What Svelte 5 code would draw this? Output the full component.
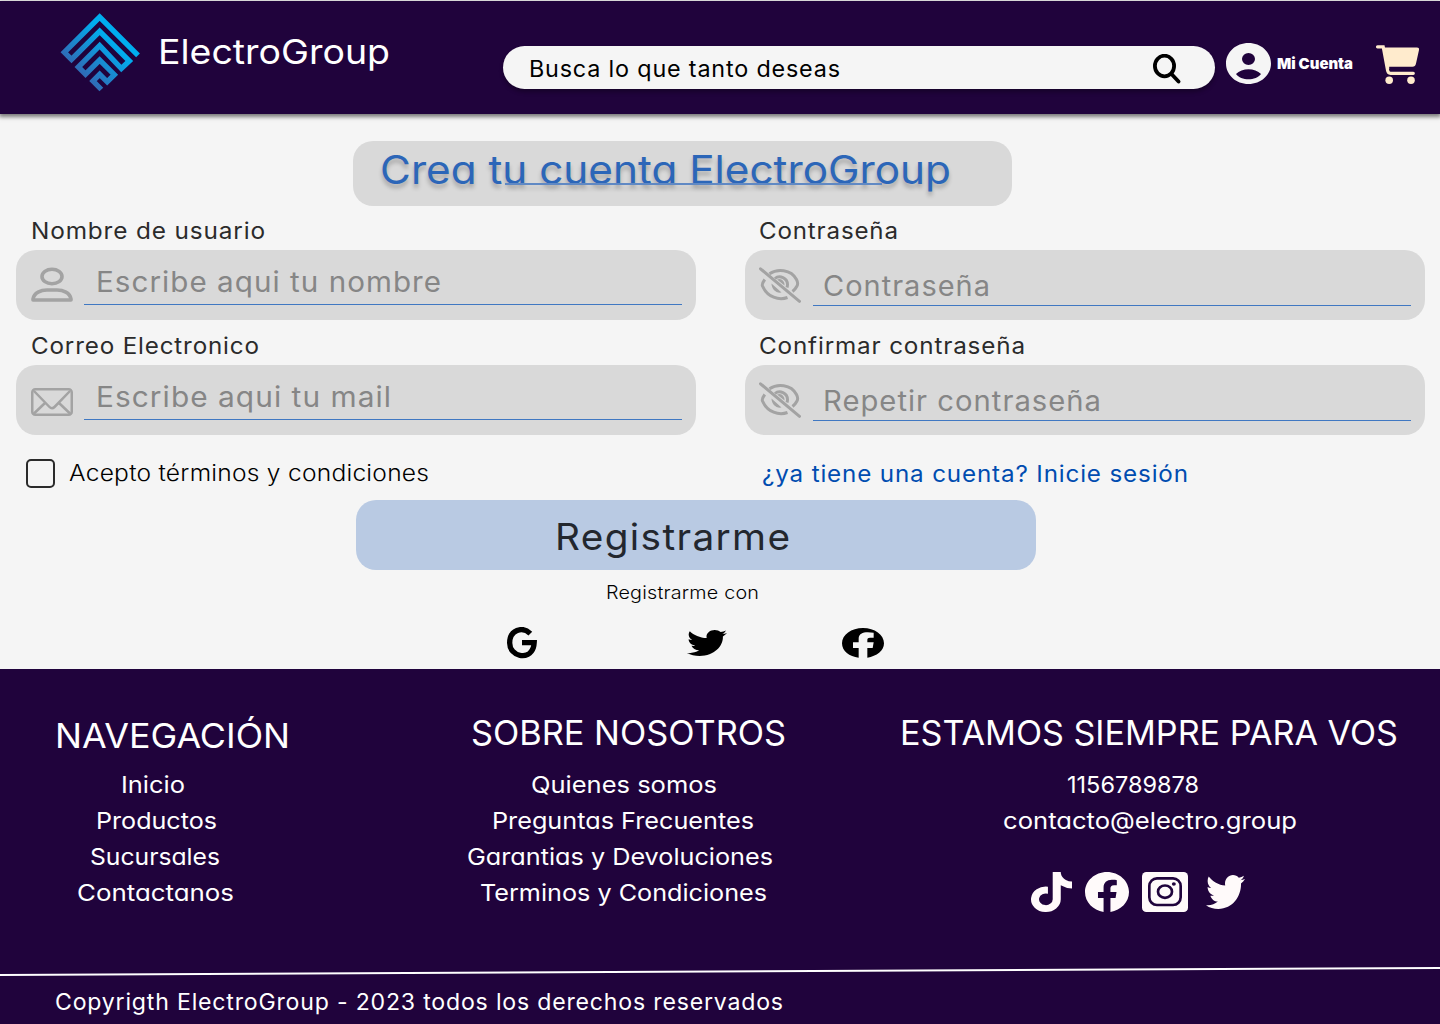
<script>
  const twitter =
    'M459.37 151.716c.325 4.548.325 9.097.325 13.645 0 138.72-105.583 298.558-298.558 298.558-59.452 0-114.68-17.219-161.137-47.106 8.447.974 16.568 1.299 25.34 1.299 49.055 0 94.213-16.568 130.274-44.832-46.132-.975-84.792-31.188-98.112-72.772 6.498.974 12.995 1.624 19.818 1.624 9.421 0 18.843-1.3 27.614-3.573-48.081-9.747-84.143-51.98-84.143-102.985v-1.299c13.969 7.797 30.214 12.67 47.431 13.319-28.264-18.843-46.781-51.005-46.781-87.391 0-19.492 5.197-37.36 14.294-52.954 51.655 63.675 129.3 105.258 216.365 109.807-1.624-7.797-2.599-15.918-2.599-24.04 0-57.828 46.782-104.934 104.934-104.934 30.213 0 57.502 12.67 76.67 33.137 23.715-4.548 46.456-13.32 66.599-25.34-7.798 24.366-24.366 44.833-46.132 57.827 21.117-2.273 41.584-8.122 60.426-16.243-14.292 20.791-32.161 39.308-52.628 54.253z';

  const fields = [
    { label: 'Nombre de usuario', labelWidth: 236, hint: 'Escribe aqui tu nombre', hintWidth: 347, icon: 'user' },
    { label: 'Contraseña', labelWidth: 141, hint: 'Contraseña', hintWidth: 169, icon: 'eye' },
    { label: 'Correo Electronico', labelWidth: 230, hint: 'Escribe aqui tu mail', hintWidth: 297, icon: 'mail' },
    { label: 'Confirmar contraseña', labelWidth: 268, hint: 'Repetir contraseña', hintWidth: 280, icon: 'eye' },
  ];

  const columns = [
    {
      name: 'nav', title: 'NAVEGACIÓN', width: 237,
      items: [
        { text: 'Inicio', width: 66, indent: 66 },
        { text: 'Productos', width: 123, indent: 41 },
        { text: 'Sucursales', width: 132, indent: 35 },
        { text: 'Contactanos', width: 159, indent: 22 },
      ],
    },
    {
      name: 'about', title: 'SOBRE NOSOTROS', width: 317,
      items: [
        { text: 'Quienes somos', width: 188, indent: 60 },
        { text: 'Preguntas Frecuentes', width: 264, indent: 21 },
        { text: 'Garantias y Devoluciones', width: 308, indent: -4 },
        { text: 'Terminos y Condiciones', width: 289, indent: 9 },
      ],
    },
    {
      name: 'contact', title: 'ESTAMOS SIEMPRE PARA VOS', width: 500,
      items: [
        { text: '1156789878', width: 134, indent: 167 },
        { text: 'contacto@electro.group', width: 296, indent: 103 },
      ],
    },
  ];

  // Extends a one-line text so that it fills the given width less a 1px inset
  // on each side, trailing tracking excluded.
  function fit(node, width) {
    const tracking = parseFloat(getComputedStyle(node).letterSpacing) || 0;
    const natural = node.getBoundingClientRect().width - tracking;
    node.style.transform = `translateX(1px) scaleX(${((width - 2) / natural).toFixed(4)})`;
  }
</script>

<div class="page">
  <header>
    <svg class="logo" viewBox="60 36 240 242">
      <defs>
        <linearGradient id="brand" gradientUnits="userSpaceOnUse" x1="110" y1="230" x2="215" y2="120">
          <stop offset="0" stop-color="#3563ae" />
          <stop offset="1" stop-color="#00aeef" />
        </linearGradient>
      </defs>
      <path
        d="M294 165.500L179 50.500L73 156.500L94.500 178L179 93.500L268 182.500L244 205L179 136.500L115 200.500L136.500 222L179 179.500L223 223.500L201.500 245L179 222.500L159 242.500L184 268"
        fill="none" stroke="url(#brand)" stroke-width="16" />
    </svg>
    <div class="brand geo"><span use:fit={234}>ElectroGroup</span></div>
    <div class="search">
      <span class="work" use:fit={313}>Busca lo que tanto deseas</span>
      <svg class="lens" viewBox="0 0 28 30">
        <ellipse cx="11.500" cy="12" rx="9.600" ry="10.300" />
        <path d="M18.500 20L25.500 27.500" />
      </svg>
    </div>
    <svg class="avatar" viewBox="0 0 45 41">
      <path fill-rule="evenodd" d="M22.500 0C35 0 45 9 45 20.500S35 41 22.500 41S0 32 0 20.500S10 0 22.500 0zM22.500 10a6.500 6 0 1 0 0 12a6.500 6 0 1 0 0-12zM10 31C15 38 30 38 35 31C29 24.500 16 24.500 10 31z" />
    </svg>
    <div class="account"><strong use:fit={78}>Mi Cuenta</strong></div>
    <svg class="cart" viewBox="0 0 43 39">
      <path d="M1.500 1.800H7.200L11.500 25Q12 28.300 14.500 28.300H37.300" />
      <path class="fill" d="M8.500 2.600H41Q43.300 2.600 43 5L40 18.500Q39.300 21.800 36.500 21.800H13.200V24H11z" />
      <ellipse class="fill" cx="13.200" cy="35.300" rx="3.800" ry="3.700" />
      <ellipse class="fill" cx="35" cy="35.300" rx="3.800" ry="3.700" />
    </svg>
  </header>

  <main>
    <h1 class="geo"><span use:fit={573}>Crea tu cuenta ElectroGroup</span><i class="rule"></i></h1>

    <div class="fields">
      {#each fields as f}
        <div class="field">
          <div class="label"><span class="work" use:fit={f.labelWidth}>{f.label}</span></div>
          <div class="box {f.icon}">
            {#if f.icon === 'user'}
              <svg class="icon" viewBox="0 0 42 36">
                <ellipse cx="21" cy="9.500" rx="10" ry="7.300" />
                <path d="M2 33V32C3 25.500 10 23 16 23H26C32 23 39 25.500 40 32V33z" stroke-linejoin="round" />
              </svg>
            {:else if f.icon === 'mail'}
              <svg class="icon" viewBox="0 0 42 28">
                <rect x="1.250" y="1.250" width="39.500" height="25.500" rx="3" />
                <path d="M3 3L18.500 19Q21 21.500 23.500 19L39 3M3 25.500L14.500 14.500M39 25.500L27.500 14.500" />
              </svg>
            {:else}
              <svg class="icon" viewBox="0 0 42 36">
                <path d="M10.500 6.800C18 1.500 32 2 37.500 12.500Q39.500 16.500 38 19Q36.500 22 33.500 24.500M5.800 12.500Q2.500 17 3.500 19C8.500 30.500 20 33.500 28.500 30.500" />
                <path d="M16 11.500C20.500 7.500 28.500 11 28.500 17.500Q28.500 19 28 20.500" />
                <path class="pupil" d="M18 12.500C22 10.500 26 14 25.500 18.500zM12.500 16.500L22.500 25.500C17 26.500 12.500 22 12.500 16.500z" />
                <path d="M1.500 1.800L40.500 34.300" stroke-linecap="round" />
              </svg>
            {/if}
            <div class="line"><span class="work" use:fit={f.hintWidth}>{f.hint}</span></div>
          </div>
        </div>
      {/each}
    </div>

    <div class="options">
      <i class="check"></i>
      <div class="terms"><span class="work light" use:fit={362}>Acepto términos y condiciones</span></div>
      <a class="login work" href="#login" use:fit={428}>¿ya tiene una cuenta? Inicie sesión</a>
    </div>

    <div class="submit"><span class="work" use:fit={237}>Registrarme</span></div>
    <div class="with"><span class="work light" use:fit={155}>Registrarme con</span></div>

    <div class="providers">
      <svg class="google" viewBox="0 0 90 96">
        <path d="M70 20C46-4 8 10 8 48C8 89 66 101 79 62Q81 56 81.500 47H45" />
      </svg>
      <svg class="bird" viewBox="0 48 512 416" preserveAspectRatio="none"><path d={twitter} /></svg>
      <svg class="face" viewBox="0 0 126 90">
        <path d="M50 89C22 86 0 70 0 46C0 20 28 0 63 0S126 20 126 46C126 69 104 85 76 89V60H92L95 43H76V36Q76 29 84 29H95V14C70 10 50 13 50 32V43H33V60H50z" />
      </svg>
    </div>
  </main>

  <footer>
    <div class="columns">
      {#each columns as c}
        <section class="{c.name} geo">
          <h2><span use:fit={c.width}>{c.title}</span></h2>
          {#each c.items as item}
            <div class="item" style:margin-left="{item.indent}px"><span use:fit={item.width}>{item.text}</span></div>
          {/each}
          {#if c.name === 'contact'}
            <div class="social">
              <svg class="tiktok" viewBox="0 0 448 512" preserveAspectRatio="none">
                <path d="M448,209.910a210.060,210.060,0,0,1-122.770-39.250V349.380A162.550,162.550,0,1,1,185,188.310V278.200a74.620,74.620,0,1,0,52.230,71.180V0l88,0a121.180,121.180,0,0,0,1.860,22.170h0A122.180,122.180,0,0,0,381,102.390a121.430,121.430,0,0,0,67,20.140Z" />
              </svg>
              <svg class="fb" viewBox="8 8 496 493" preserveAspectRatio="none">
                <path d="M504 256C504 119 393 8 256 8S8 119 8 256c0 123.780 90.690 226.380 209.250 245V327.690h-63V256h63v-54.640c0-62.150 37-96.480 93.670-96.480 27.140 0 55.520 4.840 55.520 4.840v61h-31.280c-30.800 0-40.410 19.120-40.410 38.730V256h68.780l-11 71.690h-57.780V501C413.310 482.380 504 379.780 504 256z" />
              </svg>
              <svg class="insta" viewBox="0 0 138 120">
                <rect width="138" height="120" rx="13" />
                <g>
                  <rect x="22" y="19" width="94" height="80" rx="23" />
                  <ellipse cx="69" cy="59" rx="21" ry="18.500" />
                </g>
                <ellipse class="dot" cx="95.500" cy="36" rx="6" ry="5" />
              </svg>
              <svg class="bird" viewBox="0 48 512 416" preserveAspectRatio="none"><path d={twitter} /></svg>
            </div>
          {/if}
        </section>
      {/each}
    </div>
    <svg class="divider" viewBox="0 0 1440 10"><path d="M0 9L1440 2" /></svg>
    <div class="copy"><span class="work" use:fit={730}>Copyrigth ElectroGroup - 2023 todos los derechos reservados</span></div>
  </footer>
</div>

<style>
  :global(body) {
    background: #f5f5f5;
  }
  .page {
    width: 1440px;
    height: 1024px;
    overflow: hidden;
    display: flex;
    flex-direction: column;
    box-sizing: border-box;
    padding-top: 1px;
    font-family: Inter, 'Open Sans', sans-serif;
    font-weight: 400;
  }
  span, strong, a {
    display: inline-block;
    white-space: nowrap;
    text-decoration: none;
    transform-origin: left center;
  }
  svg {
    display: block;
    flex: none;
  }
  .geo {
    font-feature-settings: 'cv11';
    font-weight: 400;
  }
  .work {
    font-size: 22.500px;
    letter-spacing: 0.035em;
  }
  .light {
    font-weight: 300;
    letter-spacing: 0.01em;
  }

  header {
    flex: none;
    display: flex;
    align-items: flex-start;
    height: 113px;
    background: #20033c;
    box-shadow: 0 2px 4px 1px rgba(0, 0, 0, 0.5);
  }
  .logo {
    width: 80px;
    height: 81px;
    margin: 11px 0 0 60px;
  }
  .brand {
    width: 344px;
    margin: 30px 0 0 17px;
    color: #fff;
    font-size: 34.500px;
    line-height: 41px;
  }
  .search {
    box-sizing: border-box;
    display: flex;
    justify-content: space-between;
    align-items: center;
    width: 712px;
    height: 43px;
    margin: 45px 0 0 2px;
    padding: 1px 34px 0 25px;
    border-radius: 22px;
    background: #f5f5f5;
    box-shadow: 0 3px 4px rgba(0, 0, 0, 0.3);
    color: #000;
  }
  .lens {
    width: 28px;
    height: 30px;
    margin-top: 1px;
    fill: none;
    stroke: #000;
    stroke-width: 3.800;
    stroke-linecap: round;
  }
  .avatar {
    width: 45px;
    height: 41px;
    margin: 42px 0 0 11px;
    fill: #f5f5f5;
  }
  .account {
    width: 100px;
    margin: 51px 0 0 5px;
    color: #fff;
    font-size: 15px;
    font-weight: 700;
    line-height: 23px;
  }
  .cart {
    width: 43px;
    height: 39px;
    margin-top: 44px;
    fill: none;
    stroke: #ffebcd;
    stroke-width: 3.200;
    stroke-linecap: round;
    overflow: visible;
  }
  .cart .fill {
    fill: #ffebcd;
    stroke: none;
  }

  main {
    flex: none;
    box-sizing: border-box;
    height: 555px;
    padding-top: 27px;
    color: #2b2b2b;
  }
  h1 {
    position: relative;
    box-sizing: border-box;
    width: 659px;
    height: 65px;
    margin: 0 0 0 353px;
    padding-left: 26px;
    border-radius: 20px;
    background: #d9d9d9;
    color: #2c66b8;
    font-size: 39px;
    line-height: 57px;
    text-shadow: 0 4px 4px rgba(0, 0, 0, 0.25);
  }
  .rule {
    position: absolute;
    left: 152px;
    top: 42px;
    width: 377px;
    height: 2px;
    background: #6089c4;
    box-shadow: 0 4px 4px rgba(0, 0, 0, 0.12);
  }
  .fields {
    display: grid;
    grid-template-columns: 680px 680px;
    gap: 11px 49px;
    padding: 10px 0 0 16px;
  }
  .label {
    height: 30px;
    padding-left: 14px;
    margin-bottom: 4px;
    line-height: 30px;
  }
  .box {
    box-sizing: border-box;
    display: flex;
    height: 70px;
    padding: 0 14px;
    border-radius: 20px;
    background: #d9d9d9;
    color: #868686;
  }
  .icon {
    width: 42px;
    height: 36px;
    margin: 17px 12px 0 0;
    fill: none;
    stroke: #a3a3a3;
    stroke-width: 3.600;
    overflow: visible;
  }
  .user .icon, .mail .icon {
    margin-left: 1px;
    margin-right: 11px;
  }
  .mail .icon {
    height: 28px;
    margin-top: 23px;
    stroke-width: 2.500;
  }
  .eye .icon {
    stroke-width: 3;
  }
  .icon .pupil {
    fill: #a3a3a3;
    stroke: none;
  }
  .line {
    flex: 1;
    height: 54px;
    padding-left: 11px;
    border-bottom: 1px solid #4078c2;
  }
  .line .work {
    font-size: 28px;
    line-height: 64px;
  }
  .eye .line {
    height: 55px;
    padding-left: 9px;
  }
  .eye .line .work {
    line-height: 72px;
  }
  .field:nth-child(even) .label {
    padding-left: 13px;
  }
  .options {
    display: flex;
    align-items: center;
    height: 29px;
    padding: 24px 0 12px 26px;
    line-height: 29px;
  }
  .check {
    box-sizing: border-box;
    flex: none;
    width: 29px;
    height: 29px;
    border: 2px solid #2b2b2b;
    border-radius: 5px;
  }
  .terms {
    width: 693px;
    margin-left: 13px;
    color: #000;
    line-height: 31px;
  }
  .login {
    color: #004cb0;
  }
  .submit {
    box-sizing: border-box;
    width: 680px;
    height: 70px;
    margin-left: 356px;
    padding-left: 198px;
    border-radius: 20px;
    background: #b9cae3;
    color: #23272e;
    line-height: 74px;
  }
  .submit .work {
    font-size: 37px;
  }
  .with {
    height: 44px;
    padding-left: 605px;
    color: #000;
    line-height: 45px;
  }
  .with .work {
    font-size: 18px;
  }
  .providers {
    display: flex;
    align-items: center;
    height: 32px;
    margin-top: 13px;
    padding-left: 507px;
  }
  .google {
    width: 30px;
    height: 32px;
    fill: none;
    stroke: #000;
    stroke-width: 16;
  }
  .providers .bird {
    width: 40px;
    height: 26px;
    margin: 0 115px 0 150px;
  }
  .face {
    width: 42px;
    height: 30px;
  }

  footer {
    position: relative;
    flex: 1;
    background: #20033c;
    color: #fff;
  }
  .columns {
    display: grid;
    grid-template-columns: 416px 429px 1fr;
    box-sizing: border-box;
    height: 297px;
    padding: 43px 0 0 54px;
  }
  h2 {
    height: 55px;
    margin: 0;
    font-size: 34.500px;
    font-weight: 400;
    line-height: 42px;
  }
  .nav h2 {
    line-height: 48px;
  }
  .item {
    height: 36px;
    font-size: 23.500px;
    line-height: 36px;
  }
  .social {
    display: flex;
    align-items: center;
    height: 40px;
    margin: 33px 0 0 132px;
    fill: #fffafa;
  }
  .tiktok {
    width: 41px;
    height: 40px;
  }
  .fb {
    width: 44px;
    height: 40px;
    margin: 0 13px;
  }
  .insta {
    width: 46px;
    height: 40px;
  }
  .insta g {
    fill: none;
    stroke: #20033c;
    stroke-width: 8;
  }
  .insta .dot {
    fill: #20033c;
  }
  .social .bird {
    width: 39px;
    height: 34px;
    margin-left: 18px;
  }
  .divider {
    width: 1440px;
    height: 10px;
    stroke: #fff;
    stroke-width: 2;
  }
  .copy {
    padding: 10px 0 0 54px;
    line-height: 31px;
  }
</style>
